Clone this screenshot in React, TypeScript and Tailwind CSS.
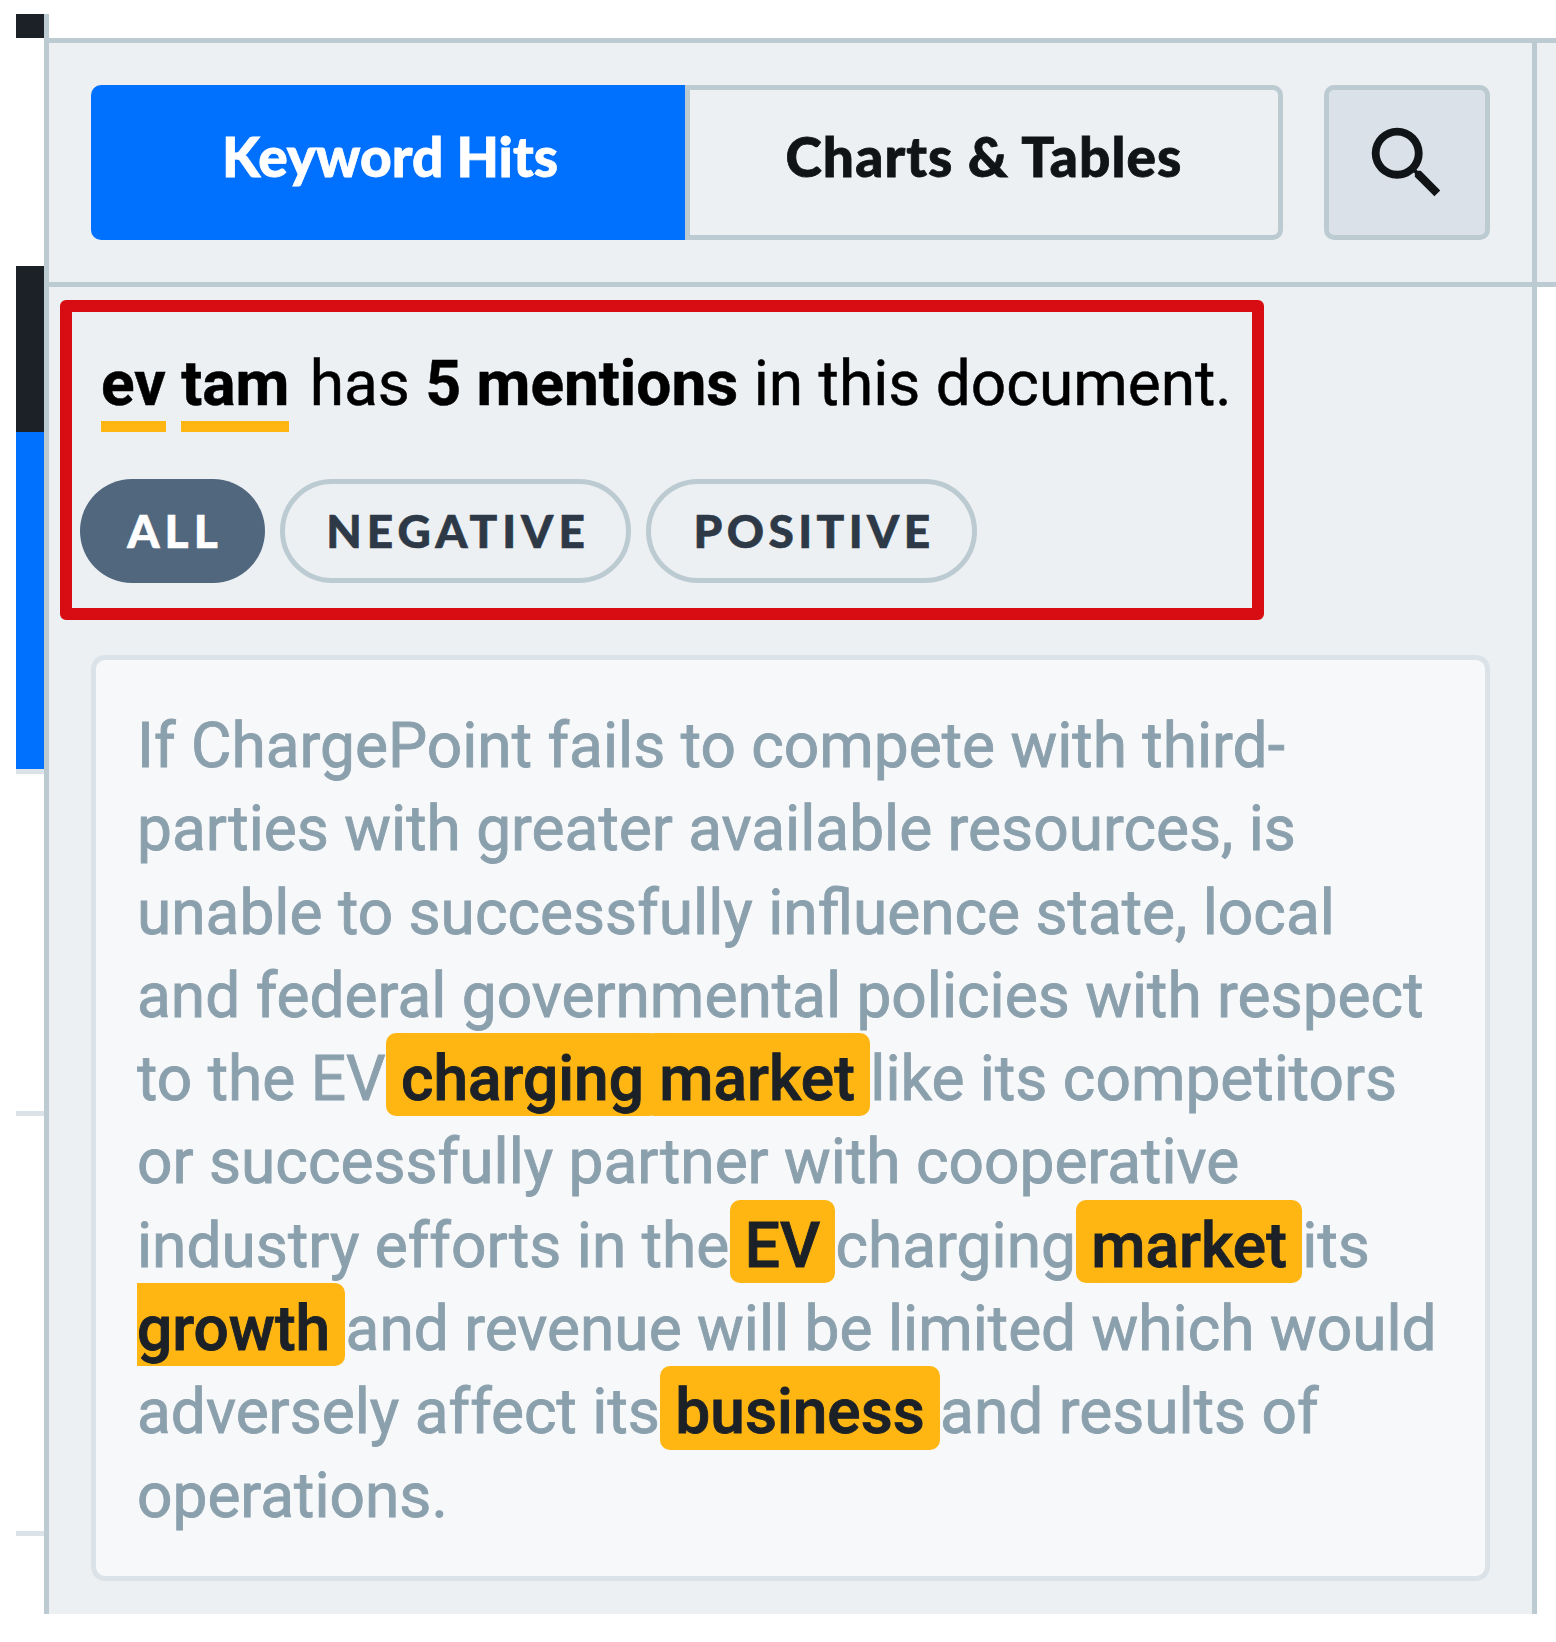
import clsx from "clsx";
import { MdSearch } from "react-icons/md";

interface PillProps {
  label: string;
  active?: boolean;
  className?: string;
}

function Pill({ label, active, className }: PillProps) {
  return (
    <button
      className={clsx(
        "h-[104px] rounded-full pl-[5px] font-['Lato',sans-serif] text-[46px] font-black leading-none whitespace-nowrap [-webkit-text-stroke:0.6px]",
        active
          ? "bg-[#51677e] text-white"
          : "border-[5px] border-[#bccad1] text-[#2d3947]",
        className
      )}
    >
      {label}
    </button>
  );
}

// The side shadows widen the highlight over the neighbouring spaces.
function Hit({ children }: { children: string }) {
  return (
    <mark className="-mt-1 inline-block h-[83.3px] rounded-[10px] bg-[#ffb612] pt-1 font-medium text-[#1b2127] shadow-[-15px_0_#ffb612,15px_0_#ffb612]">
      {children}
    </mark>
  );
}

function Rail() {
  return (
    <div className="flex w-7 flex-col">
      <div className="h-6 bg-[#1b2127]" />
      <div className="h-[228px]" />
      <div className="h-[166px] bg-[#1b2127]" />
      <div className="h-[337px] bg-[#0070ff]" />
      <div className="h-[5px] bg-[#dce3e8]" />
      <div className="h-[337px]" />
      <div className="h-[5px] bg-[#dce3e8]" />
      <div className="h-[415px]" />
      <div className="h-[5px] bg-[#dce3e8]" />
    </div>
  );
}

function Header() {
  return (
    <div className="flex h-[249px] border-y-[5px] border-[#bccad1] bg-[#ecf0f3]">
      <div className="flex w-[1488px] items-start border-r-[5px] border-[#bccad1] pt-[42px] pl-[42px]">
        <button className="h-[155px] w-[594px] rounded-l-[10px] bg-[#0070ff] pb-[12px] pl-1 font-['Lato',sans-serif] text-[55px] font-black text-white [-webkit-text-stroke:0.8px]">
          Keyword Hits
        </button>
        <button className="h-[155px] w-[598px] rounded-r-[10px] border-[5px] border-[#bccad1] pb-[12px] font-['Lato',sans-serif] text-[55px] font-black tracking-[1.1px] text-[#101417] [-webkit-text-stroke:0.8px]">
          Charts &amp; Tables
        </button>
        <button className="ml-[41px] flex h-[155px] w-[166px] items-center justify-center rounded-[10px] border-[5px] border-[#bccad1] bg-[#dbe1e8]">
          <MdSearch className="size-[94px] text-[#101417]" />
        </button>
      </div>
    </div>
  );
}

export default function App() {
  return (
    <div className="h-[1642px] w-[1556px] overflow-hidden bg-white pt-[14px] pl-4 font-['Roboto',sans-serif]">
      <div className="flex h-[1600px]">
        <Rail />
        <div className="flex flex-1 flex-col border-l-[5px] border-[#bccad1]">
          <div className="h-6" />
          <Header />
          <div className="w-[1488px] flex-1 border-r-[5px] border-[#bccad1] bg-[#ecf0f3] pt-[13px]">
            <section className="ml-[11px] h-[320px] w-[1204px] rounded-[6px] border-[12px] border-[#d80d13]">
              <p className="mt-[35px] ml-[29px] text-[62.2px] leading-[74px] whitespace-nowrap text-black [-webkit-text-stroke:0.5px]">
                <b className="inline-block h-[85px] border-b-[11px] border-[#ffb612]">ev</b>{" "}
                <b className="mr-[5px] inline-block h-[85px] border-b-[11px] border-[#ffb612]">tam</b>{" "}
                has <b>5 mentions</b> in this document.
              </p>
              <div className="mt-[47px] ml-2 flex gap-[15px]">
                <Pill label="ALL" active className="w-[185px] tracking-[5px]" />
                <Pill label="NEGATIVE" className="w-[351px] tracking-[5px]" />
                <Pill label="POSITIVE" className="w-[331px] tracking-[4.4px]" />
              </div>
            </section>
            <article className="mt-[35px] ml-[42px] h-[926px] w-[1399px] rounded-[14px] border-[5px] border-[#dce3e8] bg-[#f7f8fa] pt-[44px] pl-[41px]">
              <p className="overflow-hidden text-[62.2px] leading-[83.3px] whitespace-nowrap text-[#8ba0ad] [-webkit-text-stroke:0.9px]">
                If ChargePoint fails to compete with third-
                <br />
                parties with greater available resources, is
                <br />
                unable to successfully influence state, local
                <br />
                and federal governmental policies with respect
                <br />
                to the EV <Hit>charging</Hit> <Hit>market</Hit> like its competitors
                <br />
                or successfully partner with cooperative
                <br />
                industry efforts in the <Hit>EV</Hit> charging <Hit>market</Hit> its
                <br />
                <Hit>growth</Hit> and revenue will be limited which would
                <br />
                adversely affect its <Hit>business</Hit> and results of
                <br />
                operations.
              </p>
            </article>
          </div>
        </div>
      </div>
    </div>
  );
}
